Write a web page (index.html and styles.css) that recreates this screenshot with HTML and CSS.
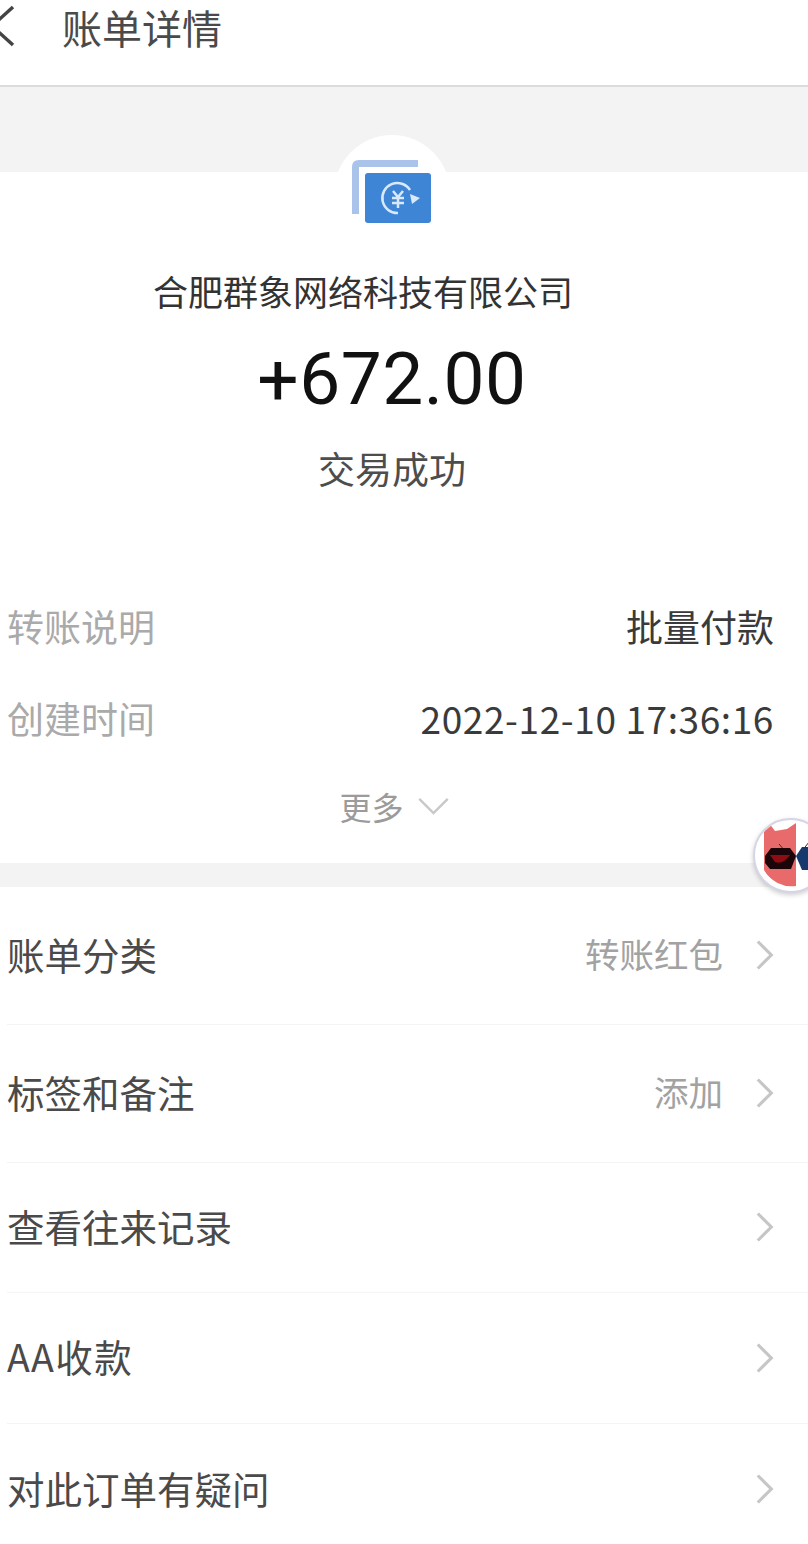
FILE: index.html
```html
<!DOCTYPE html>
<html lang="zh-CN">
<head>
    <meta charset="UTF-8">
    <title>账单详情</title>
    <link rel="stylesheet" href="styles.css">
</head>
<body>
    <!-- Top bar -->
    <div class="header">
        <svg class="back-icon" viewBox="0 0 16 44"><path d="M13 3 L-8 22 L13 41"/></svg>
        <span class="header-title">账单详情</span>
    </div>

    <div class="grey-strip"></div>

    <!-- Summary card -->
    <div class="card">
        <div class="badge">
            <svg viewBox="0 0 84 70" class="badge-icon">
                <path class="back-sheet" d="M5.5 56 V9 Q5.5 5.5 9 5.5 H68" />
                <rect class="front-sheet" x="15" y="15" width="66" height="50" rx="3"/>
                <path class="yuan-ring" d="M60 32 A15 15 0 1 0 48 55"/>
                <path class="yuan-arrow" d="M60 36 L70 40 L62 46 Z"/>
                <path class="yuan-mark" d="M43 33 L48 39 L53 33 M42 40 H54 M42 45 H54 M48 39 V50"/>
            </svg>
        </div>
        <div class="company">合肥群象网络科技有限公司</div>
        <div class="amount">+672.00</div>
        <div class="status">交易成功</div>

        <div class="info-row info-row-first">
            <span class="info-label">转账说明</span>
            <span class="info-value">批量付款</span>
        </div>
        <div class="info-row">
            <span class="info-label">创建时间</span>
            <span class="info-value info-date">2022-12-10 17:36:16</span>
        </div>
        <div class="more">
            <span>更多</span>
            <svg class="more-icon" viewBox="0 0 34 20"><path d="M2 2 L17 17 L32 2"/></svg>
        </div>
    </div>

    <div class="grey-gap"></div>

    <!-- Action list -->
    <div class="list">
        <div class="list-row row-tall">
            <span>账单分类</span>
            <span class="row-hint">转账红包</span>
            <svg class="chevron" viewBox="0 0 20 34"><path d="M2 2 L17 17 L2 32"/></svg>
        </div>
        <div class="list-row row-tall">
            <span>标签和备注</span>
            <span class="row-hint">添加</span>
            <svg class="chevron" viewBox="0 0 20 34"><path d="M2 2 L17 17 L2 32"/></svg>
        </div>
        <div class="list-row row-short">
            <span>查看往来记录</span>
            <svg class="chevron" viewBox="0 0 20 34"><path d="M2 2 L17 17 L2 32"/></svg>
        </div>
        <div class="list-row">
            <span class="row-latin">AA收款</span>
            <svg class="chevron" viewBox="0 0 20 34"><path d="M2 2 L17 17 L2 32"/></svg>
        </div>
        <div class="list-row list-row-last">
            <span>对此订单有疑问</span>
            <svg class="chevron" viewBox="0 0 20 34"><path d="M2 2 L17 17 L2 32"/></svg>
        </div>
    </div>

    <!-- Floating assistant ball -->
    <div class="float-ball">
        <svg class="float-art" viewBox="0 0 71 71">
            <path class="devil-face" d="M9 12 L14 3 L20 11 L32 9 L41 3 V66 A32 32 0 0 1 9 50 Z"/>
            <path class="antenna" d="M24 24 L30 31 M54 22 L47 31"/>
            <path class="lens-dark" d="M10 36 L16 28 H35 L41 36 L36 49 H15 L10 43 Z"/>
            <path class="lens-mouth" d="M15 35 H35 Q28 45 20 42 Z"/>
            <path class="lens-blue" d="M41 36 L47 27 H55 V50 H47 Z"/>
        </svg>
    </div>
</body>
</html>
```
FILE: styles.css
```css
/* Page */
* {
    box-sizing: border-box;
}

html, body {
    margin: 0;
    height: 1544px;
    overflow: hidden;
}

body {
    position: relative;
    background: #fff;
    color: #333;
    font-family: "Noto Sans CJK SC", "Noto Sans", sans-serif;
}

/* Header */
.header {
    height: 87px;
    padding-left: 62px;
    border-bottom: 2px solid #dcdcdc;
    position: relative;
}

.header-title {
    display: block;
    font-size: 40px;
    line-height: 54px;
    color: #4a4a4a;
}

.back-icon {
    position: absolute;
    left: 0;
    top: 4px;
    width: 16px;
    height: 44px;
    fill: none;
    stroke: #444;
    stroke-width: 3.5;
}

.grey-strip {
    height: 85px;
    background: #f3f3f3;
}

/* Card */
.card {
    background: #fff;
    border-radius: 18px 18px 0 0;
    height: 691px;
    padding-right: 24px;
    display: flex;
    flex-direction: column;
    align-items: center;
}

.badge {
    width: 116px;
    height: 116px;
    margin-top: -37px;
    border-radius: 50%;
    background: #fff;
    display: flex;
    align-items: center;
    justify-content: center;
}

.badge-icon {
    width: 84px;
    height: 70px;
}

.back-sheet {
    fill: none;
    stroke: #a9c3eb;
    stroke-width: 7;
}

.front-sheet {
    fill: #3f85d6;
}

.yuan-ring, .yuan-mark {
    fill: none;
    stroke: #d8e9fa;
    stroke-width: 2.5;
}

.yuan-arrow {
    fill: #d8e9fa;
}

.company {
    margin-top: 15px;
    margin-right: 58px;
    font-size: 35px;
    line-height: 50px;
    color: #333;
}

.amount {
    margin-top: 23px;
    font-family: "Roboto", sans-serif;
    font-size: 73px;
    line-height: 80px;
    color: #111;
    letter-spacing: 0.5px;
}

.status {
    margin-top: 23px;
    font-size: 37px;
    line-height: 52px;
    color: #4d4d4d;
}

.info-row {
    align-self: stretch;
    display: flex;
    justify-content: space-between;
    align-items: center;
    height: 52px;
    margin-top: 40px;
    padding: 0 10px 0 7px;
    font-size: 37px;
}

.info-row-first {
    margin-top: 106px;
}

.info-label {
    color: #aaa;
}

.info-value {
    color: #3a3a3a;
}

.info-date {
    letter-spacing: 0.6px;
}

.more {
    display: flex;
    align-items: center;
    gap: 13px;
    margin-top: 39px;
    margin-left: 5px;
    font-size: 32px;
    line-height: 46px;
    color: #9b9b9b;
}

.more-icon {
    width: 33px;
    height: 19px;
    fill: none;
    stroke: #c8c8c8;
    stroke-width: 2.5;
}

.grey-gap {
    height: 24px;
    background: #f3f3f3;
}

/* List */
.list-row {
    display: flex;
    align-items: center;
    height: 131px;
    margin-left: 7px;
    padding: 0 34px 5px 0;
    font-size: 37.5px;
    color: #4a4a4a;
    border-bottom: 1px solid #f5f5f5;
}

.row-tall {
    height: 138px;
}

.row-short {
    height: 130px;
}

.list-row-last {
    border-bottom: none;
}

.row-latin {
    letter-spacing: 1.5px;
}

.row-hint {
    margin-left: auto;
    font-size: 34.5px;
    color: #a2a2a2;
}

.chevron {
    width: 18px;
    height: 32px;
    margin-top: 4px;
    margin-left: 33px;
    fill: none;
    stroke: #c6c6c6;
    stroke-width: 3.5;
}

.list-row > span:first-child + .chevron {
    margin-left: auto;
}

/* Floating ball */
.float-ball {
    position: absolute;
    left: 753px;
    top: 818px;
    width: 75px;
    height: 75px;
    border-radius: 50%;
    background: #fff;
    border: 2px solid #d5d5e8;
    box-shadow: 0 2px 5px rgba(0, 0, 0, 0.2);
    overflow: hidden;
}

.float-art {
    display: block;
    width: 71px;
    height: 71px;
    filter: blur(0.6px);
}

.devil-face {
    fill: #e96a6a;
}

.antenna {
    fill: none;
    stroke: #333;
    stroke-width: 1;
}

.lens-dark {
    fill: #1c0508;
}

.lens-mouth {
    fill: #8d0d12;
}

.lens-blue {
    fill: #173a6e;
}
```
